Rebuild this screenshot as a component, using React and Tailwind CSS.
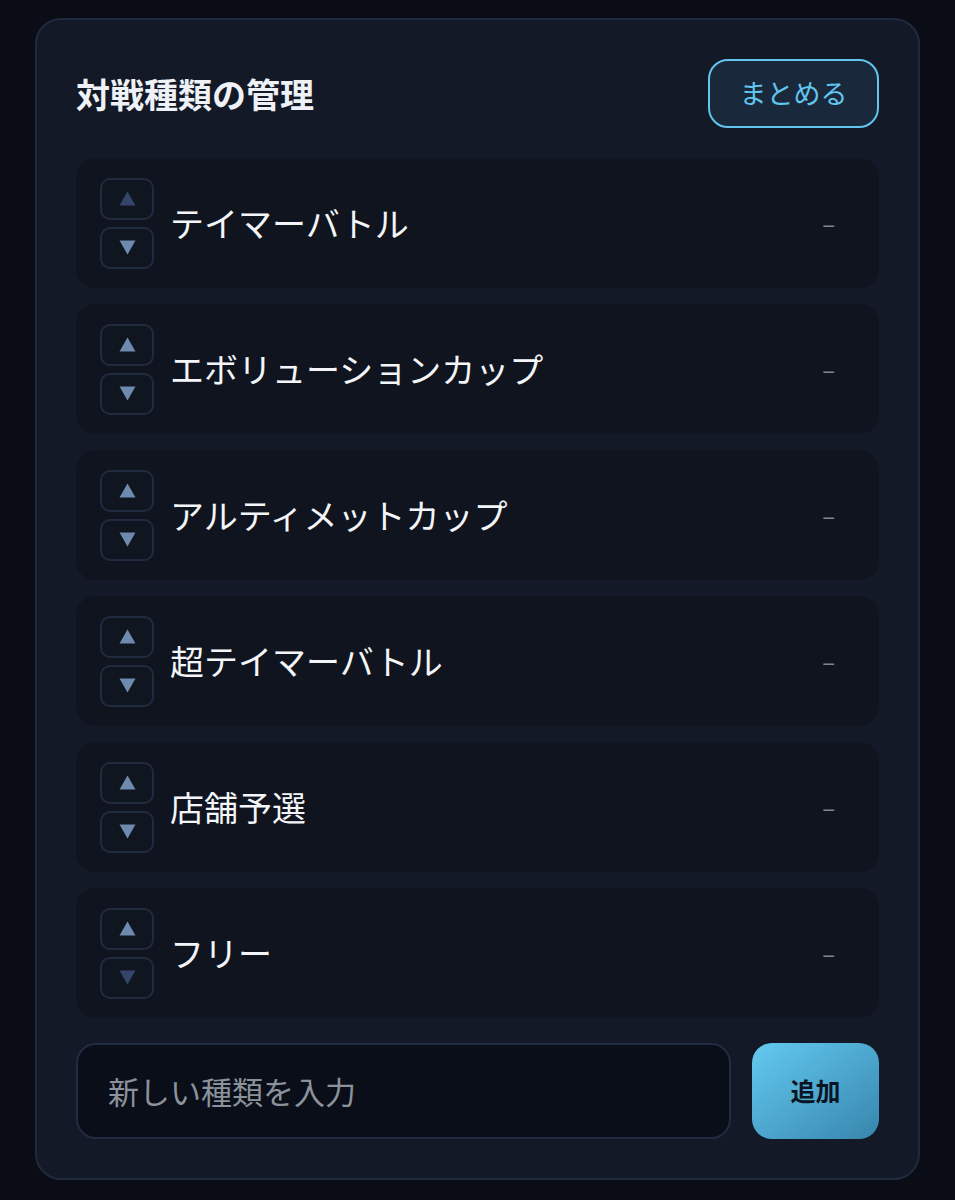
import React from "react";

const items = [
  "テイマーバトル",
  "エボリューションカップ",
  "アルティメットカップ",
  "超テイマーバトル",
  "店舗予選",
  "フリー",
];

function ArrowBtn({ dir, disabled }) {
  const fill = disabled ? "#33456a" : "#6e8aae";
  return (
    <button className="flex h-[42px] w-[54px] items-center justify-center rounded-[10px] border-2 border-[#212b40] bg-[#10161f]">
      <svg width="17" height="15" viewBox="0 0 17 15">
        {dir === "up" ? (
          <path d="M8.5 0.5 L16.5 14.5 L0.5 14.5 Z" fill={fill} />
        ) : (
          <path d="M0.5 0.5 L16.5 0.5 L8.5 14.5 Z" fill={fill} />
        )}
      </svg>
    </button>
  );
}

export default function App() {
  return (
    <div
      className="min-h-[1200px] bg-[#0a0d16] px-[35px] pt-[18px] pb-[20px]"
      style={{ fontFamily: '"Noto Sans CJK JP", "Noto Sans", sans-serif' }}
    >
      <div className="rounded-[26px] border-2 border-[#202a3e] bg-[#131926] px-[39px] pt-[39px] pb-[39px]">
        <div className="flex items-center justify-between">
          <h1 className="text-[34px] font-bold leading-none text-[#eef2f7]">対戦種類の管理</h1>
          <button className="flex h-[69px] w-[171px] items-center justify-center rounded-[20px] border-2 border-[#62c5ee] bg-[#19293b] text-[27px] text-[#62c5ee]">
            まとめる
          </button>
        </div>
        <div className="mt-[30px] flex flex-col gap-[16px]">
          {items.map((name, i) => (
            <div
              key={name}
              className="flex h-[130px] items-center rounded-[20px] bg-[#0f141e] pl-[24px] pr-[44px]"
            >
              <div className="flex flex-col gap-[7px]">
                <ArrowBtn dir="up" disabled={i === 0} />
                <ArrowBtn dir="down" disabled={i === items.length - 1} />
              </div>
              <span className="ml-[16px] flex-1 text-[34px] leading-none text-[#f3f5f8]">{name}</span>
              <span className="text-[24px] leading-none text-[#7c8697]">–</span>
            </div>
          ))}
        </div>
        <div className="mt-[25px] flex gap-[21px]">
          <div className="flex h-[96px] flex-1 items-center rounded-[20px] border-2 border-[#212b42] bg-[#0a0e18] px-[30px]">
            <span className="text-[31px] text-[#8c929c]">新しい種類を入力</span>
          </div>
          <button className="flex h-[96px] w-[127px] items-center justify-center rounded-[20px] bg-gradient-to-br from-[#64caf1] to-[#3786ad] text-[25px] font-bold text-[#0b1422]">
            追加
          </button>
        </div>
      </div>
    </div>
  );
}
